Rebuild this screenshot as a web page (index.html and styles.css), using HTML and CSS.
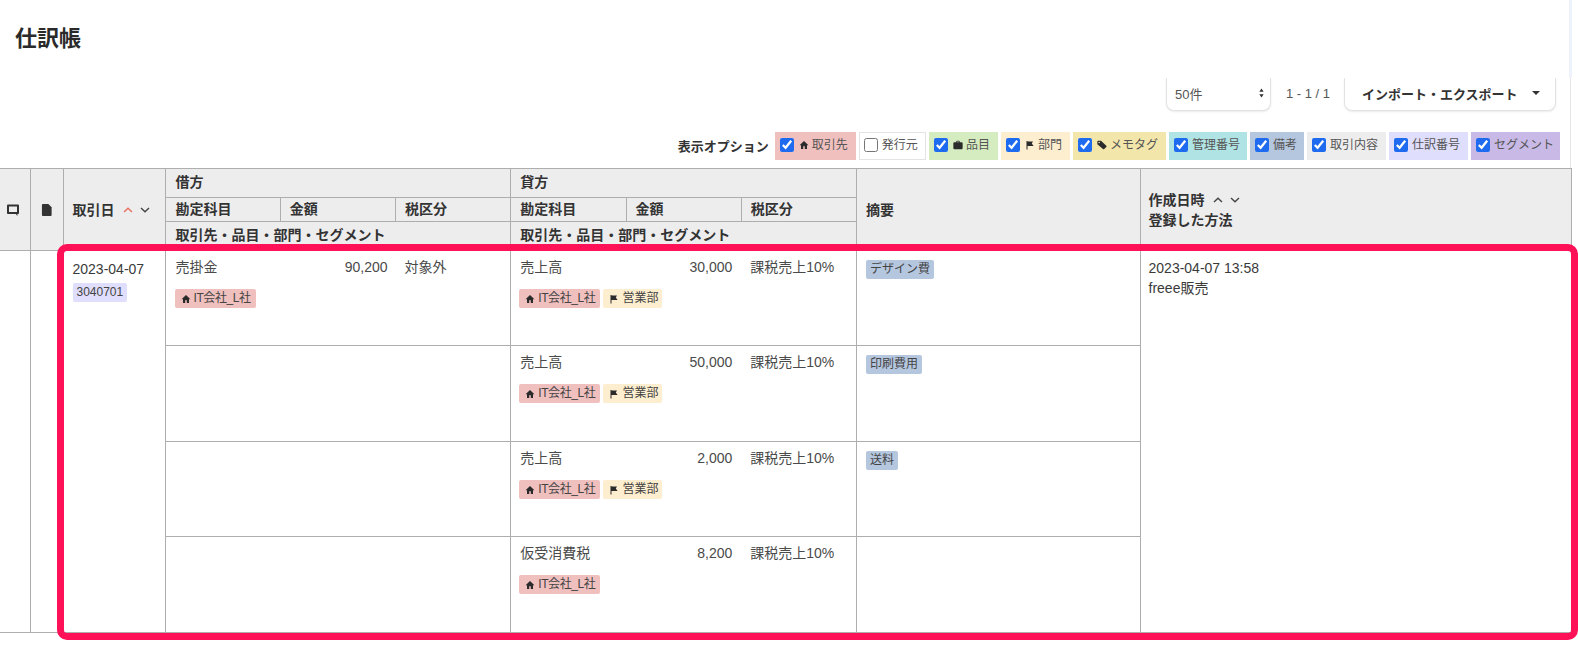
FILE: index.html
```html
<!DOCTYPE html>
<html lang="ja">
<head>
<meta charset="utf-8">
<title>仕訳帳</title>
<link rel="stylesheet" href="styles.css">
</head>
<body>
<svg class="sprite" width="0" height="0" aria-hidden="true">
  <symbol id="i-home" viewBox="0 0 10 10"><path d="M5 1 0.6 5.2H2v3.8h2.2V6.2h1.6V9H8V5.2h1.4z"/></symbol>
  <symbol id="i-bag" viewBox="0 0 11 10"><path d="M3.6 2V1.2C3.6.6 4 .2 4.6.2h1.800c.6 0 1 .4 1 1V2h2.200c.6 0 1 .4 1 1v5.600c0 .6-.4 1-1 1H1.400c-.6 0-1-.4-1-1V3c0-.6.4-1 1-1zm1-.9V2h1.800V1.100z"/></symbol>
  <symbol id="i-flag" viewBox="0 0 10 10"><path d="M1.500 1h1v.4H8L6.800 3.600 8.600 6H2.500v3.400h-1z"/></symbol>
  <symbol id="i-tag" viewBox="0 0 12 11"><path d="M.4 1.400C.4.800.8.400 1.400.400h3.400l6.400 6c.4.400.4 1 0 1.400L8.600 10.400c-.4.400-1 .4-1.400 0L.4 4.600zM2.600 3.400a.9.900 0 1 0 0-1.800.9.900 0 0 0 0 1.800z"/></symbol>
  <symbol id="i-up" viewBox="0 0 10 6"><path d="M1 5 5 1.200 9 5" fill="none" stroke="currentColor" stroke-width="1.400"/></symbol>
  <symbol id="i-down" viewBox="0 0 10 6"><path d="M1 1 5 4.800 9 1" fill="none" stroke="currentColor" stroke-width="1.400"/></symbol>
</svg>

<div class="page">
  <div class="track"></div>
  <div class="track-line"></div>

  <h1 class="title">仕訳帳</h1>

  <div class="toolbar">
    <div class="select"><span>50件</span>
      <svg class="updown" viewBox="0 0 6 11"><path d="M3 0 5.600 4H.4zM3 11 .4 7h5.200z"/></svg>
    </div>
    <span class="paging">1 - 1 / 1</span>
    <div class="menu-btn"><span>インポート・エクスポート</span><i class="caret"></i></div>
  </div>

  <div class="options">
    <span class="options-label">表示オプション</span>
    <label class="opt opt-partner"><input type="checkbox" checked><svg class="ico"><use href="#i-home"/></svg><span class="opt-text">取引先</span></label>
    <label class="opt opt-issuer"><input type="checkbox"><span>発行元</span></label>
    <label class="opt opt-item"><input type="checkbox" checked><svg class="ico"><use href="#i-bag"/></svg><span class="opt-text">品目</span></label>
    <label class="opt opt-dept"><input type="checkbox" checked><svg class="ico"><use href="#i-flag"/></svg><span class="opt-text">部門</span></label>
    <label class="opt opt-memo"><input type="checkbox" checked><svg class="ico"><use href="#i-tag"/></svg><span class="opt-text">メモタグ</span></label>
    <label class="opt opt-mgmt"><input type="checkbox" checked><span>管理番号</span></label>
    <label class="opt opt-note"><input type="checkbox" checked><span>備考</span></label>
    <label class="opt opt-content"><input type="checkbox" checked><span>取引内容</span></label>
    <label class="opt opt-number"><input type="checkbox" checked><span>仕訳番号</span></label>
    <label class="opt opt-segment"><input type="checkbox" checked><span>セグメント</span></label>
  </div>

  <div class="table-wrap">
    <table class="journal">
      <colgroup>
        <col class="c-icon1"><col class="c-icon2"><col class="c-date">
        <col class="c-sub"><col class="c-sub"><col class="c-sub">
        <col class="c-sub"><col class="c-sub"><col class="c-sub">
        <col class="c-desc"><col class="c-created">
      </colgroup>
      <thead>
        <tr class="h1">
          <th rowspan="3" class="icon-th comment-th"><svg class="th-ico" viewBox="0 0 12 12"><path fill-rule="evenodd" d="M.8 .6h10.400c.4 0 .8.4.8.800v7.800c0 .4-.4.8-.8.8H10.400V12L8.800 10H.8c-.4 0-.8-.4-.8-.8V1.400C0 1 .4.600.8.600zM2 2.600v5.400h8V2.600z"/></svg></th>
          <th rowspan="3" class="icon-th"><svg class="th-ico" viewBox="0 0 11 13"><path d="M1 0h6l3.500 3.500V12c0 .6-.4 1-1 1H1c-.6 0-1-.4-1-1V1c0-.6.400-1 1-1z"/></svg></th>
          <th rowspan="3">取引日<svg class="chev chev-first active"><use href="#i-up"/></svg><svg class="chev"><use href="#i-down"/></svg></th>
          <th colspan="3" class="debit-start">借方</th>
          <th colspan="3">貸方</th>
          <th rowspan="3">摘要</th>
          <th rowspan="3" class="created-th">作成日時<svg class="chev chev-first"><use href="#i-up"/></svg><svg class="chev"><use href="#i-down"/></svg><br>登録した方法</th>
        </tr>
        <tr class="h2">
          <th class="debit-start">勘定科目</th><th>金額</th><th>税区分</th>
          <th>勘定科目</th><th>金額</th><th>税区分</th>
        </tr>
        <tr class="h3">
          <th colspan="3" class="debit-start">取引先・品目・部門・セグメント</th>
          <th colspan="3">取引先・品目・部門・セグメント</th>
        </tr>
      </thead>
      <tbody>
        <tr>
          <td rowspan="4"></td>
          <td rowspan="4"></td>
          <td rowspan="4" class="date-cell">
            <div class="date">2023-04-07</div>
            <span class="tag tag-number">3040701</span>
          </td>
          <td colspan="3" class="entry debit">
            <div class="line"><span>売掛金</span><span class="amount">90,200</span><span class="tax">対象外</span></div>
            <div class="tags"><span class="tag tag-partner"><svg class="ico"><use href="#i-home"/></svg>IT会社_L社</span></div>
          </td>
          <td colspan="3" class="entry">
            <div class="line"><span>売上高</span><span class="amount">30,000</span><span class="tax">課税売上10%</span></div>
            <div class="tags"><span class="tag tag-partner"><svg class="ico"><use href="#i-home"/></svg>IT会社_L社</span><span class="tag tag-dept"><svg class="ico"><use href="#i-flag"/></svg>営業部</span></div>
          </td>
          <td class="desc"><span class="tag tag-note">デザイン費</span></td>
          <td rowspan="4" class="created">2023-04-07 13:58<br>freee販売</td>
        </tr>
        <tr>
          <td colspan="3"></td>
          <td colspan="3" class="entry">
            <div class="line"><span>売上高</span><span class="amount">50,000</span><span class="tax">課税売上10%</span></div>
            <div class="tags"><span class="tag tag-partner"><svg class="ico"><use href="#i-home"/></svg>IT会社_L社</span><span class="tag tag-dept"><svg class="ico"><use href="#i-flag"/></svg>営業部</span></div>
          </td>
          <td class="desc"><span class="tag tag-note">印刷費用</span></td>
        </tr>
        <tr>
          <td colspan="3"></td>
          <td colspan="3" class="entry">
            <div class="line"><span>売上高</span><span class="amount">2,000</span><span class="tax">課税売上10%</span></div>
            <div class="tags"><span class="tag tag-partner"><svg class="ico"><use href="#i-home"/></svg>IT会社_L社</span><span class="tag tag-dept"><svg class="ico"><use href="#i-flag"/></svg>営業部</span></div>
          </td>
          <td class="desc"><span class="tag tag-note">送料</span></td>
        </tr>
        <tr>
          <td colspan="3"></td>
          <td colspan="3" class="entry">
            <div class="line"><span>仮受消費税</span><span class="amount">8,200</span><span class="tax">課税売上10%</span></div>
            <div class="tags"><span class="tag tag-partner"><svg class="ico"><use href="#i-home"/></svg>IT会社_L社</span></div>
          </td>
          <td class="desc"></td>
        </tr>
      </tbody>
    </table>
    <div class="highlight"></div>
  </div>
</div>
</body>
</html>
```

FILE: styles.css
```css
* { box-sizing: border-box; }

html, body { margin: 0; padding: 0; background: #fff; }

body {
  font-family: "Liberation Sans", "Noto Sans CJK JP", sans-serif;
  font-size: 14px;
  color: #3a3a3a;
  overflow: hidden;
}

.sprite { position: absolute; }

.page {
  position: relative;
  height: 646px;
}

.track {
  position: absolute;
  top: 0;
  right: 6px;
  width: 3px;
  height: 78px;
  background: #edf2fb;
}

.track-line {
  position: absolute;
  top: 78px;
  right: 7px;
  width: 1px;
  height: 90px;
  background: #e6e6ea;
}

.title {
  margin: 0;
  height: 78px;
  padding: 23px 0 0 15px;
  font-size: 22px;
  line-height: 31px;
  font-weight: 700;
  color: #2a2a2a;
}

/* toolbar */
.toolbar {
  display: flex;
  justify-content: flex-end;
  align-items: stretch;
  height: 33px;
  padding-right: 22px;
}

.select {
  display: flex;
  align-items: center;
  justify-content: space-between;
  width: 105px;
  padding: 0 6px 2px 8px;
  font-size: 13px;
  color: #555;
  background: #fff;
  border: 1px solid #e2e2e2;
  border-top: 0;
  border-radius: 0 0 8px 8px;
  box-shadow: 0 1px 2px rgba(0, 0, 0, .08);
}

.updown { width: 5px; height: 10px; fill: #333; }

.paging {
  display: flex;
  align-items: center;
  margin: 0 14px 0 15px;
  padding-bottom: 2px;
  font-size: 13px;
  color: #555;
}

.menu-btn {
  display: flex;
  align-items: center;
  justify-content: space-between;
  width: 212px;
  padding: 0 15px 2px 17px;
  font-size: 13px;
  font-weight: 700;
  color: #333;
  background: #fff;
  border: 1px solid #e2e2e2;
  border-top: 0;
  border-radius: 0 0 8px 8px;
  box-shadow: 0 1px 2px rgba(0, 0, 0, .08);
}

.caret {
  width: 0;
  height: 0;
  border-left: 4px solid transparent;
  border-right: 4px solid transparent;
  border-top: 4px solid #333;
}

/* display options */
.options {
  display: flex;
  justify-content: flex-end;
  align-items: flex-start;
  gap: 3px;
  height: 28px;
  margin: 21px 0 8px;
  padding-right: 18px;
}

.options-label {
  margin-right: 3px;
  padding-top: 7px;
  font-size: 13px;
  line-height: 16px;
  font-weight: 700;
  color: #333;
}

.opt {
  display: flex;
  align-items: center;
  height: 28px;
  padding: 0 8px 3px 5px;
  font-size: 12px;
  line-height: 16px;
  color: #555;
}

.opt input {
  width: 14px;
  height: 14px;
  margin: 0 4px 0 0;
  accent-color: #1f6bf0;
}

.opt .ico { margin: 0 3px 0 1px; }

.opt-partner { background: #f0c0bf; }
.opt-issuer { background: #fff; border: 1px solid #e4e4e4; padding-left: 4px; padding-right: 7px; }
.opt-item { background: #d5ecc0; }
.opt-dept { background: #fdeed0; }
.opt-memo { background: #f3e6ab; }
.opt-mgmt { background: #b0e3e3; padding-right: 7px; }
.opt-note { background: #b5c6df; padding-right: 7px; }
.opt-content { background: #eeedee; }
.opt-number { background: #dfdefc; }
.opt-segment { background: #c8b9e6; padding-right: 6px; }

.ico {
  flex: none;
  width: 10px;
  height: 10px;
  fill: #2b2b2b;
}

/* table */
.table-wrap { position: relative; }

.journal {
  width: 1571px;
  table-layout: fixed;
  border-collapse: collapse;
}

.c-icon1 { width: 30px; }
.c-icon2 { width: 33px; }
.c-date { width: 102px; }
.c-sub { width: 115.25px; }
.c-desc { width: 283.5px; }
.c-created { width: 431px; }

.journal th, .journal td {
  padding: 0 0 0 9px;
  border: 1px solid #aeaeae;
}

.journal tr > :first-child { border-left: 0; }

.journal th {
  text-align: left;
  font-weight: 700;
  font-size: 14px;
  line-height: 20px;
  color: #333;
  background: #eeedee;
  vertical-align: middle;
  white-space: nowrap;
}

.journal .icon-th { padding: 0; text-align: center; }
.journal .comment-th { padding-right: 4px; }
.journal .debit-start { padding-left: 10px; }
.journal .created-th { padding-left: 8px; }

.h1 { height: 29px; }
.h2 { height: 24px; }
.h3 { height: 29px; }

.journal .h1 th[colspan] { padding-bottom: 3px; }
.journal .h2 th { padding-bottom: 2px; }
.journal .h3 th { padding-bottom: 2px; }

.th-ico { width: 12px; height: 12px; fill: #333; vertical-align: -1px; }

.chev {
  width: 10px;
  height: 6px;
  margin-left: 7px;
  color: #444;
  vertical-align: 2px;
}

.chev-first { margin-left: 8px; }
.chev.active { color: #e8705f; }

.journal tbody tr { height: 95px; }
.journal tbody tr:nth-child(even) { height: 96px; }

.journal td { vertical-align: top; }

.journal .date-cell { padding-top: 8px; }

.journal .created { padding: 7px 0 0 8px; }

.date { line-height: 20px; margin-bottom: 4px; }

.entry { color: #4a4a4a; }

.journal .entry { padding-top: 6px; }
.journal .debit { padding-left: 10px; }
.debit .tax { padding-left: 17px; }

.line {
  display: grid;
  grid-template-columns: 105px 107px 1fr;
  line-height: 20px;
}

.amount { text-align: right; }

.tax { padding-left: 18px; white-space: nowrap; }

.tags {
  display: flex;
  gap: 3px;
  margin: 12px 0 0 -1px;
}

.tag {
  display: inline-flex;
  align-items: center;
  height: 19px;
  padding: 0 5px;
  font-size: 12px;
  line-height: 19px;
  color: #444;
  border-radius: 2px;
  white-space: nowrap;
}

.tag .ico { margin: 1px 3px 0 1px; }

.tag-partner { background: #f0c0bf; letter-spacing: -0.4px; }
.tag-dept { background: #fdeed0; padding-right: 4px; }
.tag-number { background: #dfdefc; padding: 0 4px; }
.tag-note { background: #b5c6df; padding: 0 4px; }

.journal .desc { padding-top: 9px; }

.created { line-height: 20px; color: #3a3a3a; }

/* red emphasis frame laid over the table body */
.highlight {
  position: absolute;
  top: 76px;
  left: 57px;
  right: 0;
  height: 396px;
  border: 7px solid #ff1158;
  border-radius: 10px;
  pointer-events: none;
}
```
